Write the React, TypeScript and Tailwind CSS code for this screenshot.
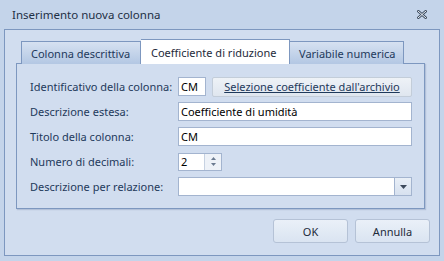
const font = { fontFamily: '"Segoe UI", "Noto Sans", "Open Sans", sans-serif' };

function CloseIcon() {
  return (
    <svg width="10" height="9" viewBox="0 0 10 9" className="block">
      <path d="M1 1 L9 8 M9 1 L1 8" stroke="#3b4a5e" strokeWidth="2.6" strokeLinecap="square" />
      <path d="M1 1 L9 8 M9 1 L1 8" stroke="#eef3fa" strokeWidth="1" strokeLinecap="square" />
    </svg>
  );
}

function Field({ label, children }: { label: string; children: React.ReactNode }) {
  return (
    <div className="flex h-[19px] items-center">
      <div className="w-[148px] shrink-0 whitespace-nowrap text-[11px] leading-none text-[#1e395b]">{label}</div>
      {children}
    </div>
  );
}

function TextBox({ value, className }: { value: string; className: string }) {
  return (
    <div
      className={`flex h-[19px] items-center whitespace-nowrap border border-[#a3b4cf] bg-white px-[2px] text-[11px] leading-none text-black ${className}`}
    >
      {value}
    </div>
  );
}

export default function App() {
  return (
    <div className="h-[261px] w-[444px] overflow-hidden bg-[#c4d4ea]" style={font}>
      <div className="flex h-[29px] items-center justify-between pl-[12px] pr-[17px]">
        <span className="whitespace-nowrap text-[11.5px] text-[#1e2f45]">Inserimento nuova colonna</span>
        <CloseIcon />
      </div>

      <div className="mx-[4px] flex h-[227px] flex-col border border-[#7d97bf] bg-[#d1ddef] pl-[11px] pr-[9px] pt-[9px]">
        {/* tabs */}
        <div className="relative z-10 -mb-px flex items-end whitespace-nowrap pl-[5px] text-[11px] leading-none">
          <div className="flex h-[23px] w-[120px] items-center border border-b-0 border-[#7d97bf] bg-gradient-to-b from-[#d6e1f1] to-[#b3c7e3] pl-[9px] text-[#1e395b]">
            Colonna descrittiva
          </div>
          <div className="flex h-[25px] w-[149px] items-center border border-b-0 border-l-0 border-[#7d97bf] bg-white pl-[10px] text-[#1e2a3a]">
            Coefficiente di riduzione
          </div>
          <div className="flex h-[23px] w-[114px] items-center border border-b-0 border-l-0 border-[#7d97bf] bg-gradient-to-b from-[#d6e1f1] to-[#b3c7e3] pl-[9px] text-[#1e395b]">
            Variabile numerica
          </div>
        </div>

        {/* content panel */}
        <div className="flex h-[146px] w-[409px] flex-col gap-[6px] border border-[#7d97bf] bg-[#d1ddef] pl-[13px] pt-[13px] shadow-[1px_1px_1px_rgba(90,110,150,0.25)]">
          <Field label="Identificativo della colonna:">
            <TextBox value="CM" className="w-[28px]" />
            <div className="ml-[6px] flex h-[20px] w-[200px] items-center justify-center whitespace-nowrap rounded-[2px] border border-[#c3cdd9] bg-gradient-to-b from-[#eef2f7] to-[#dfe6ef] text-[11px] leading-none text-[#1e395b] underline">
              Selezione coefficiente dall'archivio
            </div>
          </Field>
          <Field label="Descrizione estesa:">
            <TextBox value="Coefficiente di umidità" className="w-[234px]" />
          </Field>
          <Field label="Titolo della colonna:">
            <TextBox value="CM" className="w-[234px]" />
          </Field>
          <Field label="Numero di decimali:">
            <div className="flex h-[18px] w-[44px] border border-[#a3b4cf] bg-white">
              <div className="flex flex-1 items-center px-[2px] text-[11px] leading-none text-black">2</div>
              <div className="flex w-[17px] flex-col items-center justify-center gap-[3px] border-l border-[#c7d2e2] bg-[#eef2f8]">
                <svg width="5" height="3" viewBox="0 0 5 3" className="block">
                  <path d="M0 3 L2.5 0 L5 3 Z" fill="#6b7a90" />
                </svg>
                <svg width="5" height="3" viewBox="0 0 5 3" className="block">
                  <path d="M0 0 L5 0 L2.5 3 Z" fill="#6b7a90" />
                </svg>
              </div>
            </div>
          </Field>
          <Field label="Descrizione per relazione:">
            <div className="flex h-[19px] w-[234px] border border-[#a3b4cf] bg-white">
              <div className="flex-1" />
              <div className="flex w-[17px] items-center justify-center border-l border-[#a3b4cf] bg-gradient-to-b from-[#e9eff7] to-[#d7e1ef]">
                <svg width="7" height="4" viewBox="0 0 7 4" className="block">
                  <path d="M0 0 L7 0 L3.5 4 Z" fill="#3d4a5c" />
                </svg>
              </div>
            </div>
          </Field>
        </div>

        {/* buttons */}
        <div className="mt-[10px] flex justify-end gap-[7px]">
          <div className="flex h-[24px] w-[75px] items-center justify-center rounded-[3px] border border-[#b5c2d6] bg-gradient-to-b from-[#eaf0f8] to-[#dae4f1] text-[11px] leading-none text-[#1e2a3a]">
            OK
          </div>
          <div className="flex h-[24px] w-[75px] items-center justify-center rounded-[3px] border border-[#b5c2d6] bg-gradient-to-b from-[#eaf0f8] to-[#dae4f1] text-[11px] leading-none text-[#1e2a3a]">
            Annulla
          </div>
        </div>
      </div>
    </div>
  );
}
